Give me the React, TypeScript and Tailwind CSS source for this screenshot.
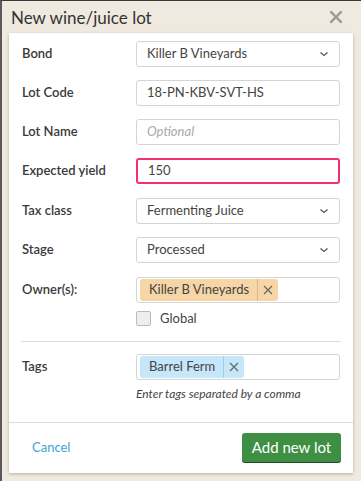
import React from "react";

const Chevron = () => (
  <svg width="10" height="6" viewBox="0 0 10 6" className="shrink-0">
    <path d="M1.5 1.5 L5 4.5 L8.5 1.5" fill="none" stroke="#555" strokeWidth="1.3" />
  </svg>
);

const XIcon = ({ size = 10, color = "#666", w = 1.2 }: { size?: number; color?: string; w?: number }) => (
  <svg width={size} height={size} viewBox="0 0 10 10">
    <path d="M1 1 L9 9 M9 1 L1 9" stroke={color} strokeWidth={w} fill="none" />
  </svg>
);

function Row({ label, children, mt = "mt-[13px]" }: { label: string; children: React.ReactNode; mt?: string }) {
  return (
    <div className={`flex items-center ${mt}`}>
      <div className="w-[115px] shrink-0 pl-px text-[13px] font-semibold text-[#3a3a3a]">{label}</div>
      {children}
    </div>
  );
}

const boxCls = "w-[204px] h-[26px] rounded-[3px] border border-[#d4d4d4] bg-white flex items-center px-[10px] text-[13px] text-[#444]";

export default function App() {
  return (
    <div
      className="w-[361px] h-[481px] bg-[#efe9df] relative overflow-hidden border-t border-t-[#3a3a3a] border-l-2 border-l-[#5a5a5a]"
      style={{ fontFamily: 'Lato, "Open Sans", sans-serif' }}
    >
      <div className="flex items-center justify-between pl-[9px] pr-[18px] h-[32px]">
        <div className="text-[17px] text-[#333] leading-none">New wine/juice lot</div>
        <XIcon size={14} color="#999" w={1.6} />
      </div>
      <div className="ml-[7px] w-[344px] bg-white shadow-[0_1px_3px_rgba(0,0,0,0.25)]">
        <div className="px-[12px] pt-[8px] pb-[19px]">
          <Row label="Bond" mt="mt-0">
            <div className={`${boxCls} justify-between`}>
              <span>Killer B Vineyards</span>
              <Chevron />
            </div>
          </Row>
          <Row label="Lot Code">
            <div className={boxCls}>18-PN-KBV-SVT-HS</div>
          </Row>
          <Row label="Lot Name">
            <div className={`${boxCls} italic text-[#aaa]`}>Optional</div>
          </Row>
          <Row label="Expected yield">
            <div className={`${boxCls} border-2 border-[#f2326d]`}>150</div>
          </Row>
          <Row label="Tax class" mt="mt-[14px]">
            <div className={`${boxCls} justify-between`}>
              <span>Fermenting Juice</span>
              <Chevron />
            </div>
          </Row>
          <Row label="Stage">
            <div className={`${boxCls} justify-between`}>
              <span>Processed</span>
              <Chevron />
            </div>
          </Row>
          <Row label="Owner(s):" mt="mt-[14px]">
            <div className="w-[204px] h-[26px] rounded-[3px] border border-[#d4d4d4] bg-white flex items-center pl-[3px]">
              <div className="flex items-center h-[22px] bg-[#f6d6a6] rounded-[3px] text-[13px] text-[#444]">
                <span className="pl-[9px] pr-[8px]">Killer B Vineyards</span>
                <span className="h-full border-l border-[#e0b887] flex items-center px-[5px]">
                  <XIcon size={10} color="#666" />
                </span>
              </div>
            </div>
          </Row>
          <div className="flex items-center ml-[115px] mt-[6px] gap-[9px]">
            <div className="w-[15px] h-[15px] rounded-[2px] border border-[#bbb] bg-[#eee]" />
            <span className="text-[13px] text-[#444]">Global</span>
          </div>
          <div className="h-px bg-[#ddd] mt-[12px]" />
          <Row label="Tags" mt="mt-[12px]">
            <div className="w-[204px] h-[26px] rounded-[3px] border border-[#d4d4d4] bg-white flex items-center pl-[3px]">
              <div className="flex items-center h-[22px] bg-[#c6e7fa] rounded-[3px] text-[13px] text-[#444]">
                <span className="pl-[9px] pr-[8px]">Barrel Ferm</span>
                <span className="h-full border-l border-[#a7cde2] flex items-center px-[5px]">
                  <XIcon size={10} color="#666" />
                </span>
              </div>
            </div>
          </Row>
          <div className="ml-[115px] mt-[5px] text-[12px] italic text-[#444]">Enter tags separated by a comma</div>
        </div>
        <div className="border-t border-[#ddd] flex items-center justify-between pl-[23px] pr-[12px] h-[51px]">
          <span className="text-[13px] text-[#3fa1d8]">Cancel</span>
          <button className="self-start mt-[10px] w-[99px] h-[29px] rounded-[3px] bg-[#3e8f43] text-white text-[15px] shadow-[0_1px_0_#1f4a22]">
            Add new lot
          </button>
        </div>
      </div>
    </div>
  );
}
